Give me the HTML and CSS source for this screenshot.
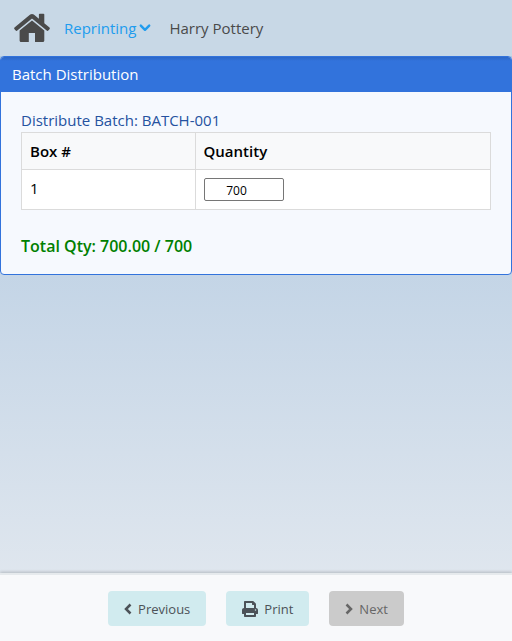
FILE: index.html
```html
<!DOCTYPE html>
<html lang="en">
<head>
<meta charset="utf-8">
<meta name="viewport" content="width=device-width, initial-scale=1">
<title>Batch Distribution</title>
<link rel="stylesheet" href="styles.css">
</head>
<body>
<nav class="navbar">
  <a class="home" href="#" aria-label="Home">
    <svg viewBox="0 0 36 30" aria-hidden="true">
      <path d="M18 7.4 5.6 17.6v9.900c0 .9.6 1.500 1.500 1.500h7.700V20h6.200v9h7.800c.9 0 1.500-.6 1.500-1.500v-9.900z"/>
      <path d="m35.500 14.600-5.200-4.300V1.600c0-.5-.3-.8-.8-.8h-3.800c-.5 0-.8.3-.8.8v4.200L19.800 1.600c-1.100-.9-2.500-.9-3.600 0L.5 14.600c-.5.400-.5.900-.2 1.300l1.400 1.700c.4.500.9.500 1.300.2L17.400 5.900c.4-.3.800-.3 1.200 0L33 17.800c.4.300.9.300 1.300-.2l1.400-1.700c.3-.4.300-.9-.2-1.300z"/>
    </svg>
  </a>
  <a class="menu" href="#">Reprinting
    <svg class="caret" viewBox="0 0 10 8" aria-hidden="true"><path d="m1.500 2 3.500 3.500L8.500 2"/></svg>
  </a>
  <a class="user" href="#">Harry Pottery</a>
</nav>
<main>
  <section class="card">
    <h1 class="card-header">Batch Distribution</h1>
    <div class="card-body">
      <p class="batch">Distribute Batch: BATCH-001</p>
      <table class="boxes">
        <thead>
          <tr><th class="box-column" scope="col">Box #</th><th id="quantity" scope="col">Quantity</th></tr>
        </thead>
        <tbody>
          <tr><td>1</td><td><input class="quantity" type="text" value="700" aria-labelledby="quantity"></td></tr>
        </tbody>
      </table>
      <p class="total">Total Qty: 700.00 / 700</p>
    </div>
  </section>
</main>
<footer class="actions">
  <button class="button" type="button">
    <svg class="chevron" viewBox="0 0 8 12" aria-hidden="true"><path d="M6.500 1.500 2 6l4.500 4.500"/></svg>Previous
  </button>
  <button class="button" type="button">
    <svg class="printer" viewBox="0 0 16 16" aria-hidden="true"><path fill-rule="evenodd" d="M14 7V3.400c0-.4-.2-.8-.4-1.100L11.700.4C11.400.2 11 0 10.600 0H3C2.400 0 2 .4 2 1v6C.9 7 0 7.900 0 9v3.500c0 .3.200.500.500.500H2v2c0 .6.400 1 1 1h10c.6 0 1-.4 1-1v-2h1.500c.3 0 .5-.2.500-.5V9c0-1.100-.9-2-2-2zM4 2h6v1.500c0 .3.200.500.500.500H12v3H4zM4 14v-2h8v2zM13.500 9.700a.75.75 0 1 1 0-1.500.75.75 0 0 1 0 1.500z"/></svg>Print
  </button>
  <button class="button" type="button" disabled>
    <svg class="chevron" viewBox="0 0 8 12" aria-hidden="true"><path d="M1.500 1.500 6 6l-4.500 4.500"/></svg>Next
  </button>
</footer>
</body>
</html>
```
FILE: styles.css
```css
* {
  box-sizing: border-box;
}

body {
  display: flex;
  flex-direction: column;
  min-height: 100vh;
  margin: 0;
  background: linear-gradient(#abc5df, #e5eaf0);
  color: #000;
  font: 15px/24px "Segoe UI", "Open Sans", sans-serif;
}

h1,
p {
  margin: 0;
}

a {
  color: inherit;
  text-decoration: none;
}

.navbar {
  display: flex;
  align-items: center;
  height: 56px;
  padding: 0 14px;
  background: #c8d8e6;
  color: #4a4a4a;
}

.home,
.home svg {
  display: block;
  width: 36px;
  height: 30px;
}

.home svg {
  fill: #4a4a4a;
}

.menu {
  display: flex;
  align-items: center;
  gap: 3px;
  margin: 0 18px 0 14px;
  color: #209cee;
}

.caret {
  width: 12px;
  height: 10px;
  fill: none;
  stroke: currentColor;
  stroke-width: 2;
  stroke-linecap: round;
  stroke-linejoin: round;
}

main {
  flex: 1;
}

.card {
  overflow: hidden;
  border: 1px solid #3273dc;
  border-radius: 4px;
  background: #f6f9fe;
}

.card-header {
  padding: 5px 11px 6px;
  background: linear-gradient(#2c67c6, #3273dc 4px);
  color: #fff;
  font-size: 15px;
  font-weight: 400;
}

.card-body {
  padding: 16px 20px;
}

.batch {
  color: #2552a0;
}

.boxes {
  width: 100%;
  border-collapse: collapse;
  background: #fff;
}

.boxes th,
.boxes td {
  padding: 6px 8px;
  border: 1px solid #dbdbdb;
  text-align: left;
}

.boxes th {
  background: #f8f9fa;
  font-weight: 600;
}

.boxes td {
  padding: 8px;
  line-height: 20px;
  vertical-align: top;
}

.boxes .box-column {
  width: 37%;
}

.quantity {
  display: block;
  width: 80px;
  height: 23px;
  padding: 1px 16px 0 2px;
  border: 1px solid #767676;
  border-radius: 2px;
  background: #fff;
  color: #000;
  font: 12px "Segoe UI", "Open Sans", sans-serif;
  text-align: center;
}

.total {
  margin-top: 24px;
  color: #008000;
  font-size: 16px;
  font-weight: 600;
}

.actions {
  display: flex;
  justify-content: center;
  gap: 20px;
  padding: 16px 12px 15px;
  border-top: 2px solid #e6eaed;
  background: #f8f9fb;
  box-shadow: 0 -1px 3px #0003;
}

.button {
  display: flex;
  align-items: center;
  gap: 6px;
  height: 35px;
  padding: 0 16px;
  border: 0;
  border-radius: 4px;
  background: #d1ebef;
  color: #4c5258;
  font: 13px/20px "Segoe UI", "Open Sans", sans-serif;
}

.button:disabled {
  background: #cbcbcb;
  color: #666;
}

.chevron {
  width: 8px;
  height: 12px;
  fill: none;
  stroke: currentColor;
  stroke-width: 2.5;
}

.printer {
  width: 16px;
  height: 16px;
  fill: currentColor;
}
```
